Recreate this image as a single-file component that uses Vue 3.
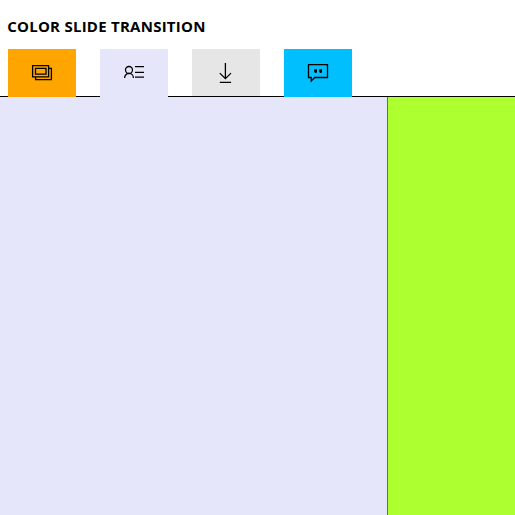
<script setup>
const tabs = ['slides', 'contact', 'download', 'quote']
</script>

<template>
  <main class="page">
    <h1 class="title">COLOR SLIDE TRANSITION</h1>
    <nav class="tabs">
      <button v-for="tab in tabs" :key="tab" class="tab" :class="tab" :aria-label="tab">
        <svg v-if="tab === 'slides'" class="icon" viewBox="0 0 24 24">
          <path d="M2.6 5.6h16v11.3h-16z M5.5 8.4h10.5v5.8H5.5z M18.6 8.4h2.8v11.2H5.6v-2.7" />
        </svg>
        <svg v-else-if="tab === 'contact'" class="icon" viewBox="0 0 24 24">
          <circle cx="7" cy="10" r="3.5" />
          <path d="M2.6 18v-.2a4.4 4.4 0 0 1 8.8 0v.2 M13 6.7h9 M13 12.3h9 M13 17.2h9" />
        </svg>
        <svg v-else-if="tab === 'download'" class="icon" viewBox="0 0 24 24">
          <path d="M11.4 3v15.6 M5.8 13.1l5.6 5.6 5.6-5.6 M5.8 22.3h11.3" />
        </svg>
        <svg v-else class="icon" viewBox="0 0 24 24">
          <path d="M2.5 4.7h19v12.8H8.8L5.3 21v-3.5H2.5z" />
          <path class="marks" d="M8.2 9.2h2.8v2.7l-.8 1h-.9l-1.1-.8z M13.2 9.2h2.8v2.7l-.8 1h-.9l-1.1-.8z" />
        </svg>
      </button>
    </nav>
    <section class="stage">
      <div class="current"></div>
      <div class="previous"></div>
    </section>
  </main>
</template>

<style>
body {
  margin: 0;
  overflow: hidden;
}
</style>

<style scoped>
.page {
  display: flex;
  flex-direction: column;
  height: 100vh;
  background: #fff;
  font-family: "Open Sans", "Noto Sans", sans-serif;
}
.title {
  box-sizing: border-box;
  height: 49px;
  margin: 0;
  padding: 15px 0 0 7.2px;
  color: #000;
  font-size: 15px;
  font-weight: 700;
  line-height: 22px;
  letter-spacing: 0.25px;
  white-space: nowrap;
}
.tabs {
  display: flex;
  gap: 24px;
  box-sizing: border-box;
  height: 48px;
  padding-left: 8px;
  border-bottom: 1px solid #000;
}
.tab {
  display: flex;
  align-items: flex-start;
  justify-content: center;
  box-sizing: border-box;
  width: 68px;
  height: 48px;
  padding: 11px 0 0;
  border: 0;
}
.slides { background: #ffa500; }
.contact { background: #e6e6fa; }
.download {
  height: 47px;
  background: #e6e6e6;
}
.quote { background: #00bfff; }
.icon {
  width: 24px;
  height: 24px;
  fill: none;
  stroke: #000;
  stroke-width: 1.3;
}
.marks {
  fill: #000;
  stroke: none;
}
.stage {
  display: flex;
  flex: 1;
}
.current {
  box-sizing: border-box;
  width: 388px;
  border-right: 1px solid #696969;
  background: #e6e6fa;
}
.previous {
  flex: 1;
  background: #adff2f;
}
</style>
